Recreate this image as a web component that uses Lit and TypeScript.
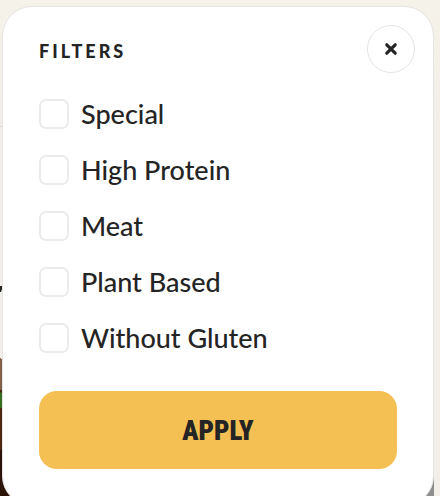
import { LitElement, html, css } from "lit";
import { customElement, state } from "lit/decorators.js";

const OPTIONS = ["Special", "High Protein", "Meat", "Plant Based", "Without Gluten"];

@customElement("app-root")
export class AppRoot extends LitElement {
  static styles = css`
    :host {
      display: block;
      position: relative;
      box-sizing: border-box;
      height: 100vh;
      overflow: hidden;
      padding: 6px 6px 0 2px;
      background: linear-gradient(#f5f2e9, #f2eeea 120px);
      color: #242424;
      font-family: Lato, "Open Sans", sans-serif;
    }
    .backdrop {
      position: absolute;
      inset: 0;
      width: 100%;
      height: 100%;
    }
    .panel {
      position: relative;
      box-sizing: border-box;
      padding: 18px 36px 36px;
      border: 1px solid #e6e4e2;
      border-radius: 30px;
      background: #fff;
    }
    .head {
      display: flex;
      align-items: center;
      justify-content: space-between;
      margin-right: -18px;
    }
    .title {
      margin: 0;
      padding-top: 4px;
      font-size: 18px;
      line-height: 24px;
      font-weight: 900;
      letter-spacing: 3px;
    }
    .close {
      display: grid;
      place-items: center;
      width: 48px;
      height: 48px;
      padding: 0;
      border: 1px solid #e4e4e4;
      border-radius: 50%;
      background: #fff;
      cursor: pointer;
    }
    .options {
      display: grid;
      gap: 26px;
      margin: 0;
      padding: 26px 0 38px;
      border: 0;
    }
    .option {
      display: flex;
      align-items: center;
      gap: 12px;
      font-size: 27px;
      line-height: 30px;
      font-weight: 500;
      cursor: pointer;
    }
    .box {
      appearance: none;
      flex: none;
      width: 30px;
      height: 30px;
      margin: 0;
      border: 2px solid #ebebeb;
      border-radius: 7px;
      background: #fff;
    }
    .box:checked {
      background: #f4bf53;
    }
    .apply {
      display: block;
      width: 100%;
      height: 78px;
      padding: 2px 0 0;
      border: 0;
      border-radius: 18px;
      background: #f4bf53;
      color: #242424;
      font: 900 27px/36px "Liberation Sans Narrow", "Roboto Condensed", Roboto, sans-serif;
      cursor: pointer;
    }
  `;

  @state() private selected = new Set<string>();

  private toggle(name: string) {
    const next = new Set(this.selected);
    next.has(name) ? next.delete(name) : next.add(name);
    this.selected = next;
  }

  render() {
    return html`
      <svg class="backdrop" aria-hidden="true">
        <path d="M0 126.5H4" stroke="#dedbd7" />
        <path d="M0 286H3L1 292H0Z" fill="#242424" />
        <path d="M0 358Q6 362 8 370V480L30 496H0Z" fill="#4a2814" />
        <path d="M0 358Q6 362 8 370V390H0Z" fill="#80614b" />
        <path d="M0 392L4 394V408H0Z" fill="#357021" />
        <path d="M0 450H8V480L30 496H0Z" fill="#2c1408" />
        <path d="M434 474V496H415V474Z" fill="#8d8d8d" />
      </svg>
      <section class="panel" aria-labelledby="title">
        <header class="head">
          <h2 class="title" id="title">FILTERS</h2>
          <button class="close" type="button" aria-label="Close">
            <svg width="14" height="14" viewBox="0 0 14 14" aria-hidden="true">
              <path d="M2.8 2.8L11.2 11.2M11.2 2.8L2.8 11.2" stroke="#242424" stroke-width="3.2" stroke-linecap="round" />
            </svg>
          </button>
        </header>
        <fieldset class="options" aria-labelledby="title">
          ${OPTIONS.map(
            (name) => html`
              <label class="option">
                <input
                  class="box"
                  type="checkbox"
                  .checked=${this.selected.has(name)}
                  @change=${() => this.toggle(name)}
                />
                <span>${name}</span>
              </label>
            `
          )}
        </fieldset>
        <button class="apply" type="button">APPLY</button>
      </section>
    `;
  }
}
